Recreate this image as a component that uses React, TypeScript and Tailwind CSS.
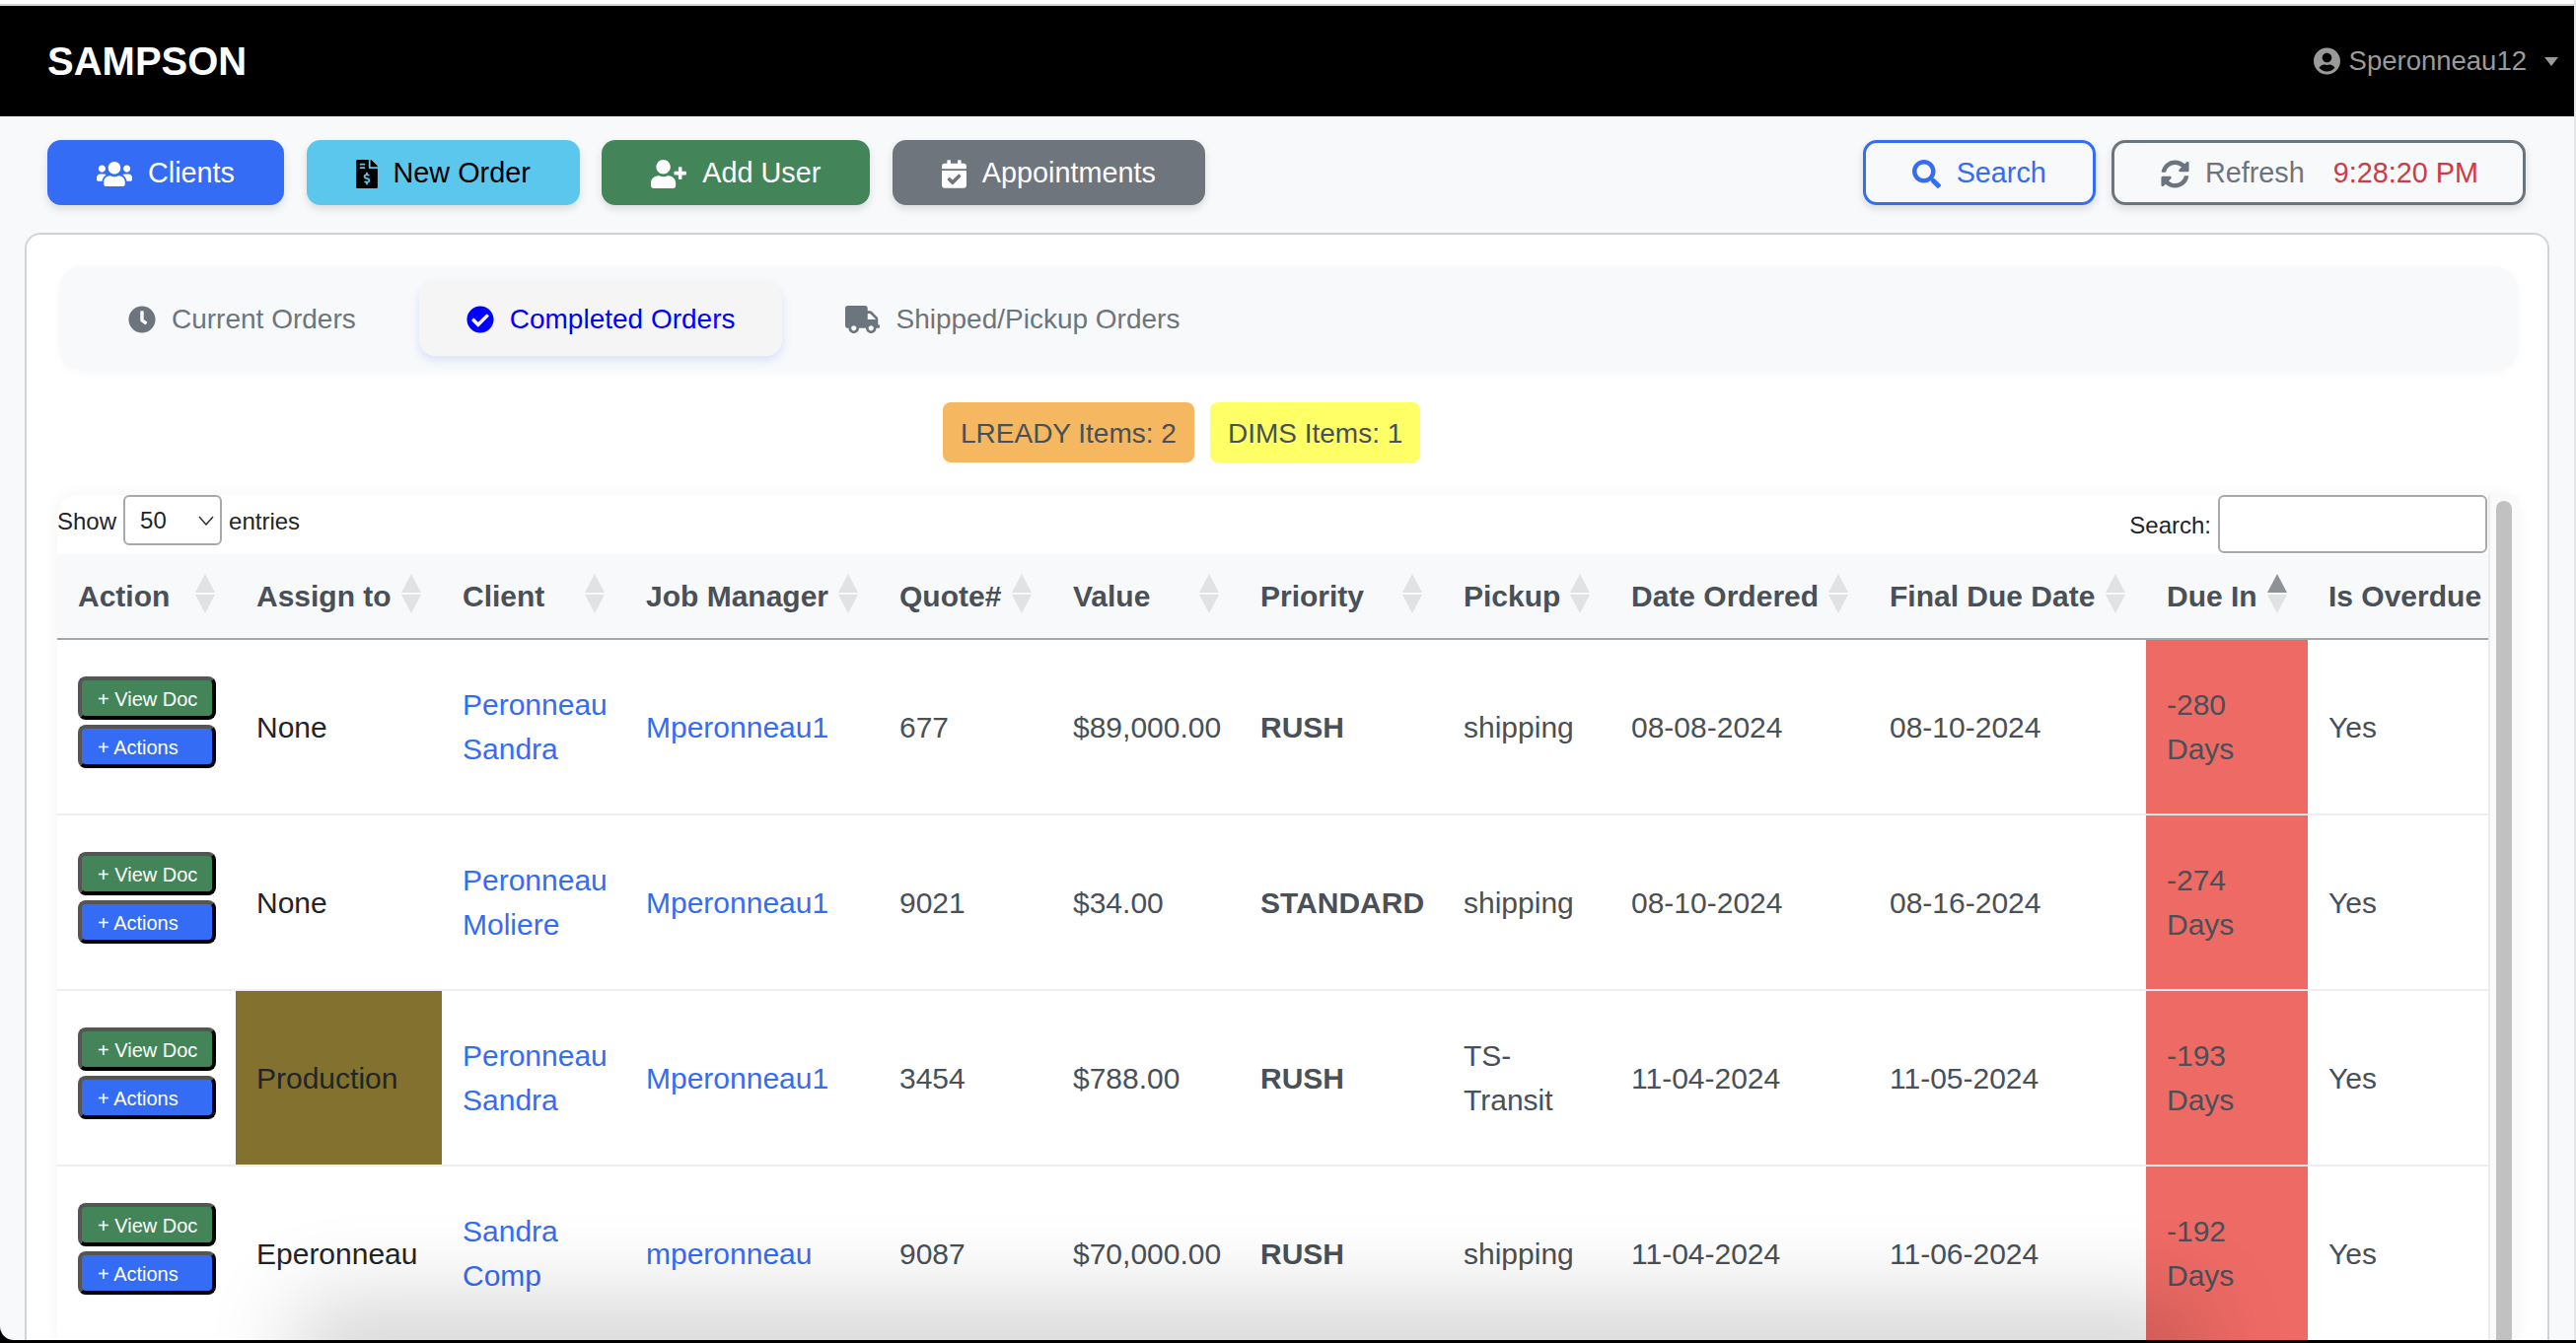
import { FC, ReactNode } from "react"
import {
  FaCalendarCheck,
  FaCheckCircle,
  FaClock,
  FaFileInvoiceDollar,
  FaSearch,
  FaSyncAlt,
  FaTruck,
  FaUserCircle,
  FaUserPlus,
  FaUsers
} from "react-icons/fa"

interface Order {
  assign: string
  assignTone?: boolean
  client: string[]
  manager: string
  quote: string
  value: string
  priority: string
  pickup: string[]
  ordered: string
  due: string
  dueIn: string
}

const orders: Order[] = [
  { assign: "None", client: ["Peronneau", "Sandra"], manager: "Mperonneau1", quote: "677", value: "$89,000.00", priority: "RUSH", pickup: ["shipping"], ordered: "08-08-2024", due: "08-10-2024", dueIn: "-280" },
  { assign: "None", client: ["Peronneau", "Moliere"], manager: "Mperonneau1", quote: "9021", value: "$34.00", priority: "STANDARD", pickup: ["shipping"], ordered: "08-10-2024", due: "08-16-2024", dueIn: "-274" },
  { assign: "Production", assignTone: true, client: ["Peronneau", "Sandra"], manager: "Mperonneau1", quote: "3454", value: "$788.00", priority: "RUSH", pickup: ["TS-", "Transit"], ordered: "11-04-2024", due: "11-05-2024", dueIn: "-193" },
  { assign: "Eperonneau", client: ["Sandra", "Comp"], manager: "mperonneau", quote: "9087", value: "$70,000.00", priority: "RUSH", pickup: ["shipping"], ordered: "11-04-2024", due: "11-06-2024", dueIn: "-192" }
]

const columns = [
  { label: "Action", width: "w-[181px]" },
  { label: "Assign to", width: "w-[209px]" },
  { label: "Client", width: "w-[186px]" },
  { label: "Job Manager", width: "w-[257px]" },
  { label: "Quote#", width: "w-[176px]" },
  { label: "Value", width: "w-[190px]" },
  { label: "Priority", width: "w-[206px]" },
  { label: "Pickup", width: "w-[170px]" },
  { label: "Date Ordered", width: "w-[262px]" },
  { label: "Final Due Date", width: "w-[281px]" },
  { label: "Due In", width: "w-[164px]", active: true },
  { label: "Is Overdue", width: "w-[183px]", noSort: true }
]

const SortArrows: FC<{ active?: boolean }> = ({ active }) => (
  <svg viewBox="0 0 20 40" className="h-[40px] w-[20px] shrink-0 -translate-y-[3px]">
    <polygon points="10,0 20,19 0,19" className={active ? "fill-[#8e9298]" : "fill-[#e1e2e4]"} />
    <polygon points="0,21 20,21 10,40" className="fill-[#e1e2e4]" />
  </svg>
)

const ToolbarButton: FC<{ className: string; icon: ReactNode; children: ReactNode }> = ({ className, icon, children }) => (
  <button className={`flex h-[66px] items-center gap-4 rounded-[14px] pt-[2px] text-[28.8px] shadow-[0_4px_8px_rgba(0,0,0,0.12)] ${className}`}>
    {icon}
    {children}
  </button>
)

const RowButton: FC<{ className: string; children: ReactNode }> = ({ className, children }) => (
  <button className={`h-[44px] w-[140px] rounded-[8px] border-4 border-t-[#555555] border-r-black border-b-black border-l-[#555555] pt-[1px] pl-4 text-left text-[20px] leading-none text-white ${className}`}>
    {children}
  </button>
)

const Lines: FC<{ lines: string[] }> = ({ lines }) => (
  <>
    {lines.map(line => (
      <div key={line}>{line}</div>
    ))}
  </>
)

export default function App() {
  const cell = "border-b-2 border-[#eeeef2] pl-[21px] align-middle"

  return (
    <div className="h-[1362px] w-full overflow-hidden bg-black font-['Liberation_Sans',Arial,sans-serif]">
      <div className="relative flex h-[1359px] flex-col overflow-hidden rounded-bl-[14px] border-r-2 border-[#e6e7e9] bg-[#f8f9fa]">
        {/* Window edge */}
        <div className="h-[6px] shrink-0 border-t-4 border-white bg-[#d2d2d2]" />

        {/* Navbar */}
        <header className="flex h-[112px] shrink-0 items-center justify-between bg-black pr-[16px] pl-[48px]">
          <span className="text-[40px] font-bold text-white">SAMPSON</span>
          <div className="flex items-center text-[27.5px] text-[#9a9a9a]">
            <FaUserCircle className="mr-[9px] h-[28px] w-[27px]" />
            <span>Speronneau12</span>
            <span className="ml-[18px] h-0 w-0 border-x-[7px] border-t-[9px] border-x-transparent border-t-[#9a9a9a]" />
          </div>
        </header>

        {/* Toolbar */}
        <div className="flex shrink-0 items-center justify-between pt-[24px] pr-[49px] pl-[48px]">
          <div className="flex gap-[22.5px]">
            <ToolbarButton className="bg-[#346cf5] px-[50px] text-white" icon={<FaUsers className="h-[29px] w-[36px]" />}>Clients</ToolbarButton>
            <ToolbarButton className="bg-[#5cc7ec] px-[50px] text-black" icon={<FaFileInvoiceDollar className="h-[29px] w-[22px]" />}>New Order</ToolbarButton>
            <ToolbarButton className="bg-[#438559] px-[50px] text-white" icon={<FaUserPlus className="h-[29px] w-[36px]" />}>Add User</ToolbarButton>
            <ToolbarButton className="bg-[#6f757c] px-[50px] text-white" icon={<FaCalendarCheck className="h-[29px] w-[25px]" />}>Appointments</ToolbarButton>
          </div>
          <div className="flex gap-[16px]">
            <ToolbarButton className="border-[3px] border-[#346cf5] px-[47px] text-[#346cf5]" icon={<FaSearch className="h-[29px] w-[29px]" />}>Search</ToolbarButton>
            <ToolbarButton className="border-[3px] border-[#6c757d] pr-[45px] pl-[47px] text-[#6c757d]" icon={<FaSyncAlt className="h-[29px] w-[29px]" />}>
              <span>Refresh</span>
              <span className="ml-[13px] text-[#d03a45]">9:28:20 PM</span>
            </ToolbarButton>
          </div>
        </div>

        {/* Orders card */}
        <main className="mt-[28px] mr-[25px] ml-[25px] flex min-h-0 grow flex-col rounded-t-[16px] border-x-2 border-t-2 border-[#d2d3d5] bg-white pt-[32px] pr-[30px] pl-[33px]">
          {/* Tabs */}
          <nav className="flex h-[106px] shrink-0 items-center gap-4 rounded-[24px] bg-[#f8f9fa] pl-[22px] shadow-[0_2px_10px_rgba(0,0,0,0.03)]">
            <button className="flex h-[75px] items-center gap-4 px-[48px] pt-[2px] text-[28px] text-[#6c757d]">
              <FaClock className="h-[28px] w-[28px]" />
              Current Orders
            </button>
            <button className="flex h-[75px] items-center gap-4 rounded-[16px] bg-[#f5f5f6] px-[48px] pt-[2px] text-[28px] text-[#0000ff] shadow-[0_4px_10px_rgba(51,102,255,0.16)]">
              <FaCheckCircle className="h-[28px] w-[28px]" />
              Completed Orders
            </button>
            <button className="flex h-[75px] items-center gap-4 px-[48px] pt-[2px] text-[28px] text-[#6c757d]">
              <FaTruck className="h-[28px] w-[35px]" />
              Shipped/Pickup Orders
            </button>
          </nav>

          {/* Item counters */}
          <div className="mt-[32px] flex shrink-0 gap-4 pl-[896px] text-[28px] text-[#495057]">
            <span className="flex h-[61px] items-center rounded-[8px] bg-[#f5b75f] px-[18px] pt-[2px]">LREADY Items: 2</span>
            <span className="flex h-[61px] items-center rounded-[8px] bg-[#ffff66] px-[18px] pt-[2px]">DIMS Items: 1</span>
          </div>

          {/* Data table */}
          <section className="mt-[33px] -ml-[2px] flex min-h-0 grow rounded-t-[20px] bg-white shadow-[0_0_16px_rgba(0,0,0,0.05)]">
            <div className="w-[2465px] shrink-0 overflow-hidden rounded-tl-[20px]">
              <div className="flex h-[60px] items-start justify-between pr-[1px] text-[24px] text-[#212529]">
                <label className="flex h-[51px] items-center">
                  <span className="translate-y-[1px]">Show</span>
                  <span className="relative mx-[7px] block">
                    <select defaultValue="50" className="h-[51px] w-[100px] appearance-none rounded-[6px] border-2 border-[#a8a9aa] bg-white pl-[15px] outline-none">
                      <option value="50">50</option>
                    </select>
                    <svg viewBox="0 0 16 10" className="pointer-events-none absolute top-[21px] right-[8px] h-[10px] w-[16px] fill-none stroke-[#333333] stroke-[1.5]">
                      <path d="M1 1l7 8 7-8" />
                    </svg>
                  </span>
                  <span className="translate-y-[1px]">entries</span>
                </label>
                <label className="flex h-[59px] items-center gap-[7px]">
                  <span className="translate-y-[1px]">Search:</span>
                  <input className="h-[59px] w-[273px] rounded-[6px] border-2 border-[#a8a9aa] bg-white outline-none" />
                </label>
              </div>

              <table className="w-[2465px] table-fixed border-separate border-spacing-0 text-[30px] leading-[45px] text-[#495057]">
                <thead>
                  <tr>
                    {columns.map(col => (
                      <th key={col.label} className={`h-[87px] border-b-2 border-[#a4a6a9] bg-[#f8f9fa] p-0 text-left font-bold ${col.width}`}>
                        <div className="flex items-center justify-between pr-[21px] pl-[21px] whitespace-nowrap">
                          {col.label}
                          {!col.noSort && <SortArrows active={col.active} />}
                        </div>
                      </th>
                    ))}
                  </tr>
                </thead>
                <tbody>
                  {orders.map((order, i) => (
                    <tr key={i} className="h-[178px]">
                      <td className={cell}>
                        <div className="flex flex-col gap-[5px] pb-[9px]">
                          <RowButton className="bg-[#438559]">+ View Doc</RowButton>
                          <RowButton className="bg-[#346cf5]">+ Actions</RowButton>
                        </div>
                      </td>
                      <td className={`${cell} text-[#212529] ${order.assignTone ? "bg-[#83722f]" : ""}`}>{order.assign}</td>
                      <td className={`${cell} text-[#346cf5]`}><Lines lines={order.client} /></td>
                      <td className={`${cell} text-[#346cf5]`}>{order.manager}</td>
                      <td className={cell}>{order.quote}</td>
                      <td className={cell}>{order.value}</td>
                      <td className={`${cell} font-bold`}>{order.priority}</td>
                      <td className={cell}><Lines lines={order.pickup} /></td>
                      <td className={cell}>{order.ordered}</td>
                      <td className={cell}>{order.due}</td>
                      <td className={`${cell} bg-[#ee6a65]`}><Lines lines={[order.dueIn, "Days"]} /></td>
                      <td className={cell}>Yes</td>
                    </tr>
                  ))}
                </tbody>
              </table>
            </div>

            {/* Scrollbar */}
            <div className="flex grow justify-center border-l-2 border-[#ececec] bg-[#fafafa] pt-[6px]">
              <div className="h-[900px] w-[16px] rounded-full bg-[#c1c1c1]" />
            </div>
          </section>
        </main>

        {/* Shadow of what sits below the window */}
        <div className="pointer-events-none absolute right-[420px] -bottom-[30px] left-[340px] h-[30px] shadow-[0_0_90px_40px_rgba(0,0,0,0.17)]" />
      </div>
    </div>
  )
}
